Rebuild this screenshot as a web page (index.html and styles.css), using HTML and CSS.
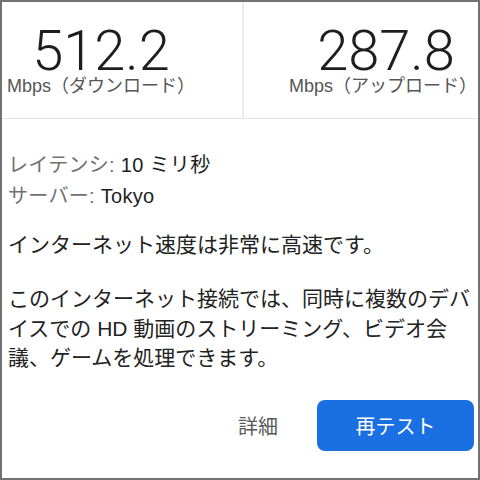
FILE: index.html
```html
<!DOCTYPE html>
<html lang="ja">
<head>
    <meta charset="UTF-8">
    <meta name="viewport" content="width=device-width, initial-scale=1.0">
    <title>速度テスト</title>
    <link rel="stylesheet" href="styles.css">
</head>
<body>

    <div class="panel">

        <!-- Results -->
        <div class="results">
            <div class="result result-down">
                <div class="value">512.2</div>
                <div class="unit">Mbps（ダウンロード）</div>
            </div>
            <div class="result result-up">
                <div class="value">287.8</div>
                <div class="unit">Mbps（アップロード）</div>
            </div>
        </div>

        <!-- Details -->
        <div class="details">
            <p class="info"><span class="label">レイテンシ:</span> 10 ミリ秒</p>
            <p class="info"><span class="label">サーバー:</span> Tokyo</p>
            <p class="summary">インターネット速度は非常に高速です。</p>
            <p class="desc">このインターネット接続では、同時に複数のデバ<br>イスでの HD 動画のストリーミング、ビデオ会議、ゲームを処理できます。</p>
        </div>

        <!-- Actions -->
        <div class="actions">
            <button class="btn-link">詳細</button>
            <button class="btn-primary">再テスト</button>
        </div>

    </div>

</body>
</html>
```

FILE: styles.css
```css
/* Global Styles */
* {
    margin: 0;
    padding: 0;
    box-sizing: border-box;
}
body {
    font-family: "Liberation Sans", "Noto Sans CJK JP", sans-serif;
    background: #fff;
    color: #222;
}

/* Panel */
.panel {
    width: 480px;
    height: 480px;
    border: 2px solid #737373;
    display: flex;
    flex-direction: column;
}

/* Results */
.results {
    display: grid;
    grid-template-columns: 242px 1fr;
    height: 117px;
    border-bottom: 1px solid #e4e4e4;
}
.result {
    display: flex;
    flex-direction: column;
    align-items: flex-start;
    padding-top: 23px;
}
.result-down {
    border-right: 2px solid #ececec;
    padding-left: 5px;
}
.result-up {
    padding-left: 45px;
}
.value {
    font-family: Roboto, "Liberation Sans", sans-serif;
    font-weight: 300;
    font-size: 56px;
    line-height: 53px;
    color: #1e1e1e;
    width: 178px;
    text-align: center;
    padding-left: 10px;
}
.result-up .value {
    padding-left: 16px;
}
.unit {
    font-size: 18px;
    line-height: 17px;
    color: #555;
    white-space: nowrap;
}

/* Details */
.details {
    padding: 31px 2px 0 6px;
}
.info {
    font-size: 20px;
    line-height: 31px;
    letter-spacing: 0.3px;
    color: #1e1e1e;
}
.label {
    color: #707070;
}
.summary {
    margin-top: 18px;
    font-size: 21px;
    line-height: 30px;
}
.desc {
    margin-top: 24px;
    font-size: 21px;
    line-height: 29.5px;
}

/* Actions */
.actions {
    display: flex;
    justify-content: flex-end;
    align-items: center;
    padding: 27px 4px 0 0;
}
.btn-link {
    background: none;
    border: none;
    font-family: "Noto Sans CJK JP", sans-serif;
    font-size: 20px;
    color: #5a5a5a;
    margin-right: 39px;
}
.btn-primary {
    width: 157px;
    height: 51px;
    border: none;
    border-radius: 8px;
    background: #1a6fe3;
    color: #fff;
    font-family: "Noto Sans CJK JP", sans-serif;
    font-size: 20px;
}
```
